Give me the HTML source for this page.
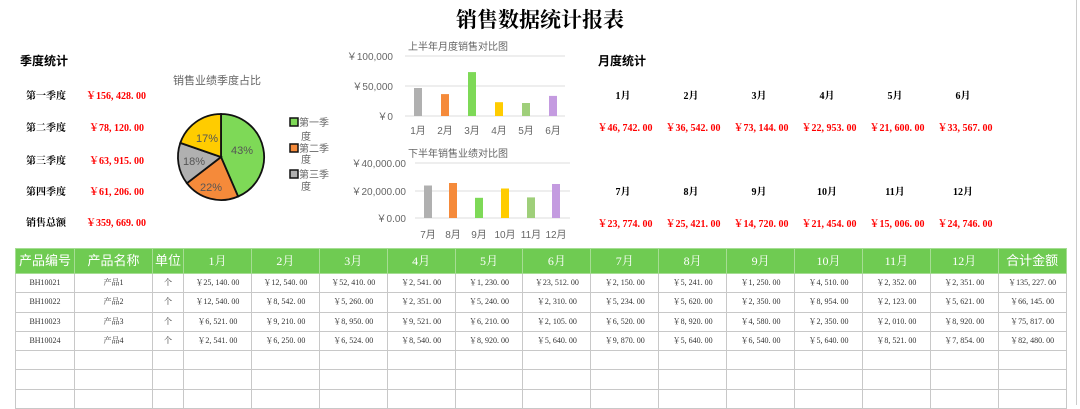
<!DOCTYPE html>
<html><head><meta charset="utf-8"><style>
*{margin:0;padding:0;box-sizing:border-box}
body{width:1080px;height:405px;background:#fff;position:relative;overflow:hidden;font-family:"Liberation Serif","Noto Serif CJK SC",serif}
.a{position:absolute;white-space:nowrap}
.t{font-family:"Liberation Sans","Noto Sans CJK SC",sans-serif}
.lb{font-size:10px;font-weight:bold;color:#000}
.rv{font-size:10px;font-weight:bold;color:#f00}
.c{transform:translateX(-50%)}
table{position:absolute;left:15px;top:248px;border-collapse:collapse;table-layout:fixed;width:1051px}
td,th{border:1px solid #c8c8c8;text-align:center;font-size:8px;height:19.3px;line-height:10px;padding:0;color:#333}
th{background:#6fcb52;color:#fff;font-weight:normal;font-size:13px;height:25px;border-color:#a6dd94;font-family:"Liberation Sans","Noto Sans CJK SC",sans-serif}
th.s{font-family:"Liberation Serif","Noto Serif CJK SC",serif;font-size:12px}
</style></head><body>
<div class="a c t" style="left:540px;top:4px;font-size:21px;font-weight:bold;font-family:'Noto Serif CJK SC',serif">销售数据统计报表</div>

<div class="a t" style="left:20px;top:52px;font-size:12px;font-weight:bold">季度统计</div>
<div class="a lb" style="left:26px;top:87px">第一季度</div><div class="a rv" style="left:86px;top:87px">￥156, 428. 00</div>
<div class="a lb" style="left:26px;top:119px">第二季度</div><div class="a rv" style="left:89px;top:119px">￥78, 120. 00</div>
<div class="a lb" style="left:26px;top:152px">第三季度</div><div class="a rv" style="left:89px;top:152px">￥63, 915. 00</div>
<div class="a lb" style="left:26px;top:183px">第四季度</div><div class="a rv" style="left:89px;top:183px">￥61, 206. 00</div>
<div class="a lb" style="left:26px;top:214px">销售总额</div><div class="a rv" style="left:86px;top:214px">￥359, 669. 00</div>

<div class="a t c" style="left:217px;top:72px;font-size:11px;color:#666">销售业绩季度占比</div>
<svg class="a" style="left:0;top:0" width="360" height="240" font-family="Liberation Sans, Noto Sans CJK SC, sans-serif">
<g stroke="#111" stroke-width="1.8">
<path d="M221,157 L221,114 A43,43 0 0 1 238.1,196.5 Z" fill="#7ed957"/>
<path d="M221,157 L238.1,196.5 A43,43 0 0 1 186.9,183.2 Z" fill="#f58a3a"/>
<path d="M221,157 L186.9,183.2 A43,43 0 0 1 180.3,142.9 Z" fill="#b0b0b0"/>
<path d="M221,157 L180.3,142.9 A43,43 0 0 1 221,114 Z" fill="#ffcc00"/>
</g>
<g font-size="11" fill="#555" text-anchor="middle">
<text x="242" y="154">43%</text>
<text x="211" y="191">22%</text>
<text x="194" y="165">18%</text>
<text x="207" y="142">17%</text>
</g>
<g stroke="#111" stroke-width="1.5"><rect x="290" y="118" width="8" height="8" fill="#7ed957"/><rect x="290" y="144" width="8" height="8" fill="#f58a3a"/><rect x="290" y="170" width="8" height="8" fill="#b0b0b0"/></g>
<g font-size="10" fill="#666"><text x="299" y="126">第一季</text><text x="301" y="140">度</text><text x="299" y="152">第二季</text><text x="301" y="163">度</text><text x="299" y="178">第三季</text><text x="301" y="190">度</text></g>
</svg>

<svg class="a" style="left:340px;top:30px" width="250" height="215" font-family="Liberation Sans, Noto Sans CJK SC, sans-serif">
<g font-size="10" fill="#666">
<text x="68" y="20">上半年月度销售对比图</text>
<text x="53" y="30" text-anchor="end">￥100,000</text>
<text x="53" y="60" text-anchor="end">￥50,000</text>
<text x="53" y="90" text-anchor="end">￥0</text>
<g text-anchor="middle"><text x="78" y="104">1月</text><text x="105" y="104">2月</text><text x="132" y="104">3月</text><text x="159" y="104">4月</text><text x="186" y="104">5月</text><text x="213" y="104">6月</text></g>
<text x="68" y="127">下半年销售业绩对比图</text>
<text x="66" y="137" text-anchor="end">￥40,000.00</text>
<text x="66" y="165" text-anchor="end">￥20,000.00</text>
<text x="66" y="192" text-anchor="end">￥0.00</text>
<g text-anchor="middle"><text x="88" y="208">7月</text><text x="113" y="208">8月</text><text x="139" y="208">9月</text><text x="165" y="208">10月</text><text x="191" y="208">11月</text><text x="216" y="208">12月</text></g>
</g>
<g stroke="#ddd" stroke-width="1"><line x1="65" y1="26" x2="225" y2="26"/><line x1="65" y1="56" x2="225" y2="56"/><line x1="65" y1="86" x2="225" y2="86"/>
<line x1="75" y1="133" x2="230" y2="133"/><line x1="75" y1="161" x2="230" y2="161"/><line x1="75" y1="188" x2="230" y2="188"/></g>
<rect x="74" y="58" width="8" height="28" fill="#b0b0b0"/>
<rect x="101" y="64.1" width="8" height="21.9" fill="#f58a3a"/>
<rect x="128" y="42.1" width="8" height="43.9" fill="#7ed957"/>
<rect x="155" y="72.2" width="8" height="13.8" fill="#ffcc00"/>
<rect x="182" y="73" width="8" height="13" fill="#9fcf7a"/>
<rect x="209" y="65.9" width="8" height="20.1" fill="#c49be0"/>
<rect x="84" y="155.5" width="8" height="32.5" fill="#b0b0b0"/>
<rect x="109" y="153" width="8" height="35" fill="#f58a3a"/>
<rect x="135" y="167.8" width="8" height="20.2" fill="#7ed957"/>
<rect x="161" y="158.5" width="8" height="29.5" fill="#ffcc00"/>
<rect x="187" y="167.4" width="8" height="20.6" fill="#9fcf7a"/>
<rect x="212" y="154" width="8" height="34" fill="#c49be0"/>
</svg>

<div class="a t" style="left:598px;top:52px;font-size:12px;font-weight:bold">月度统计</div>
<div class="a lb c" style="left:623px;top:87px">1月</div><div class="a lb c" style="left:691px;top:87px">2月</div><div class="a lb c" style="left:759px;top:87px">3月</div><div class="a lb c" style="left:827px;top:87px">4月</div><div class="a lb c" style="left:895px;top:87px">5月</div><div class="a lb c" style="left:963px;top:87px">6月</div>
<div class="a rv c" style="left:625px;top:119px">￥46, 742. 00</div><div class="a rv c" style="left:693px;top:119px">￥36, 542. 00</div><div class="a rv c" style="left:761px;top:119px">￥73, 144. 00</div><div class="a rv c" style="left:829px;top:119px">￥22, 953. 00</div><div class="a rv c" style="left:897px;top:119px">￥21, 600. 00</div><div class="a rv c" style="left:965px;top:119px">￥33, 567. 00</div>
<div class="a lb c" style="left:623px;top:183px">7月</div><div class="a lb c" style="left:691px;top:183px">8月</div><div class="a lb c" style="left:759px;top:183px">9月</div><div class="a lb c" style="left:827px;top:183px">10月</div><div class="a lb c" style="left:895px;top:183px">11月</div><div class="a lb c" style="left:963px;top:183px">12月</div>
<div class="a rv c" style="left:625px;top:215px">￥23, 774. 00</div><div class="a rv c" style="left:693px;top:215px">￥25, 421. 00</div><div class="a rv c" style="left:761px;top:215px">￥14, 720. 00</div><div class="a rv c" style="left:829px;top:215px">￥21, 454. 00</div><div class="a rv c" style="left:897px;top:215px">￥15, 006. 00</div><div class="a rv c" style="left:965px;top:215px">￥24, 746. 00</div>

<table>
<colgroup><col style="width:59px"><col style="width:78px"><col style="width:31px"><col span="13" style="width:67.9px"></colgroup>
<tr><th>产品编号</th><th>产品名称</th><th>单位</th><th class="s">1月</th><th class="s">2月</th><th class="s">3月</th><th class="s">4月</th><th class="s">5月</th><th class="s">6月</th><th class="s">7月</th><th class="s">8月</th><th class="s">9月</th><th class="s">10月</th><th class="s">11月</th><th class="s">12月</th><th>合计金额</th></tr>
<tr><td>BH10021</td><td>产品1</td><td>个</td><td>￥25, 140. 00</td><td>￥12, 540. 00</td><td>￥52, 410. 00</td><td>￥2, 541. 00</td><td>￥1, 230. 00</td><td>￥23, 512. 00</td><td>￥2, 150. 00</td><td>￥5, 241. 00</td><td>￥1, 250. 00</td><td>￥4, 510. 00</td><td>￥2, 352. 00</td><td>￥2, 351. 00</td><td>￥135, 227. 00</td></tr>
<tr><td>BH10022</td><td>产品2</td><td>个</td><td>￥12, 540. 00</td><td>￥8, 542. 00</td><td>￥5, 260. 00</td><td>￥2, 351. 00</td><td>￥5, 240. 00</td><td>￥2, 310. 00</td><td>￥5, 234. 00</td><td>￥5, 620. 00</td><td>￥2, 350. 00</td><td>￥8, 954. 00</td><td>￥2, 123. 00</td><td>￥5, 621. 00</td><td>￥66, 145. 00</td></tr>
<tr><td>BH10023</td><td>产品3</td><td>个</td><td>￥6, 521. 00</td><td>￥9, 210. 00</td><td>￥8, 950. 00</td><td>￥9, 521. 00</td><td>￥6, 210. 00</td><td>￥2, 105. 00</td><td>￥6, 520. 00</td><td>￥8, 920. 00</td><td>￥4, 580. 00</td><td>￥2, 350. 00</td><td>￥2, 010. 00</td><td>￥8, 920. 00</td><td>￥75, 817. 00</td></tr>
<tr><td>BH10024</td><td>产品4</td><td>个</td><td>￥2, 541. 00</td><td>￥6, 250. 00</td><td>￥6, 524. 00</td><td>￥8, 540. 00</td><td>￥8, 920. 00</td><td>￥5, 640. 00</td><td>￥9, 870. 00</td><td>￥5, 640. 00</td><td>￥6, 540. 00</td><td>￥5, 640. 00</td><td>￥8, 521. 00</td><td>￥7, 854. 00</td><td>￥82, 480. 00</td></tr>
<tr><td></td><td></td><td></td><td></td><td></td><td></td><td></td><td></td><td></td><td></td><td></td><td></td><td></td><td></td><td></td><td></td></tr>
<tr><td></td><td></td><td></td><td></td><td></td><td></td><td></td><td></td><td></td><td></td><td></td><td></td><td></td><td></td><td></td><td></td></tr>
<tr><td></td><td></td><td></td><td></td><td></td><td></td><td></td><td></td><td></td><td></td><td></td><td></td><td></td><td></td><td></td><td></td></tr>
</table>
<div class="a" style="left:1076px;top:0;width:1px;height:405px;background:#ccc"></div>
</body></html>
